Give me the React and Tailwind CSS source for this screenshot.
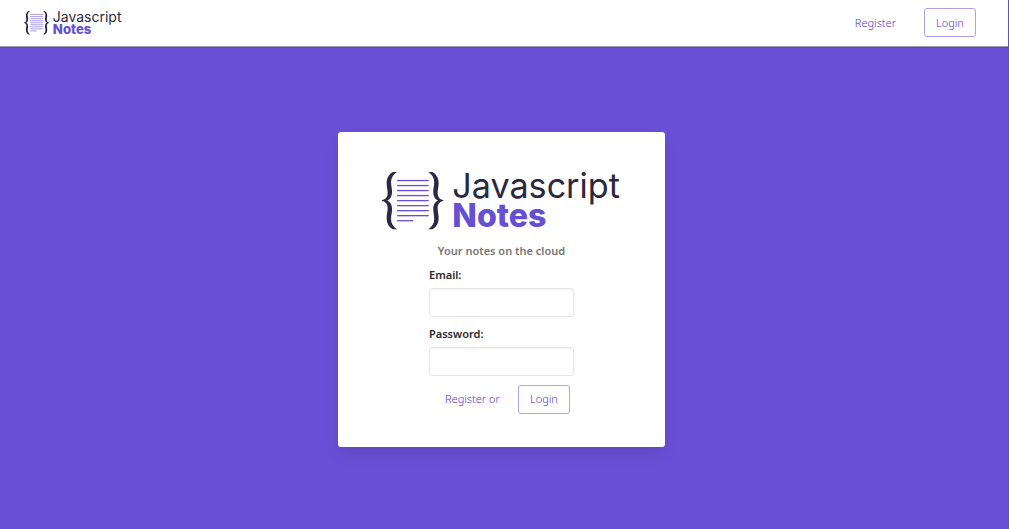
const LINES = [8, 13, 18, 23, 28, 33, 38, 43];

const BRACE =
  "M15 0 L11 0 C7 2 4.600 6 4.600 11 C4.600 15 5.600 17.500 5.600 21 C5.600 25 3.500 27.500 0 28 L0 29 C3.500 29.500 5.600 32 5.600 36 C5.600 39.500 4.600 42 4.600 46 C4.600 51 7 55 11 57 L15 57 C11 54.500 9 51 9 47 C9 43 10 40.500 10 37 C10 33 8.400 30 5.300 28.500 C8.400 27 10 24 10 20 C10 16.500 9 14 9 10 C9 6 11 2.500 15 0 Z";

function Logo({ className }) {
  return (
    <svg viewBox="0 0 238 58" className={className} role="img" aria-label="Javascript Notes">
      <g fill="#2b2840">
        <path d={BRACE} />
        <path transform="translate(61 0) scale(-1 1)" d={BRACE} />
      </g>
      <g stroke="#6550d4" strokeWidth="1.3">
        {LINES.map((y) => (
          <line key={y} x1="15" x2="46.500" y1={y + 0.5} y2={y + 0.5} />
        ))}
        <line x1="15" x2="31" y1="48.500" y2="48.500" />
      </g>
      <text x="70" y="26" fontSize="34" fill="#2b2840" className="font-['Inter',sans-serif] font-normal">
        Javascript
      </text>
      <text x="70" y="55" fontSize="32" fill="#6550d4" className="font-['Inter',sans-serif] font-extrabold">
        Notes
      </text>
    </svg>
  );
}

function LoginButton({ type = "button" }) {
  return (
    <button type={type} className="h-[29px] w-[52px] rounded-[3px] border border-[#afa1e9] bg-white text-[#5536cc]">
      Login
    </button>
  );
}

function Field({ id, label, type }) {
  return (
    <div className="flex flex-col gap-[5px]">
      <label htmlFor={id} className="font-semibold text-[#2b2b2b]">
        {label}
      </label>
      <input
        id={id}
        type={type}
        className="h-[29px] w-full rounded-[3px] border border-[#e6e6e6] bg-white px-2 shadow-[inset_0_1px_1px_rgba(10,10,10,0.05)] outline-none"
      />
    </div>
  );
}

export default function App() {
  return (
    <div className="flex min-h-screen flex-col bg-[#694fd6] font-['Noto_Sans','Open_Sans',sans-serif] text-[11px] leading-4">
      <header className="mr-px flex items-center justify-between border-b border-[#a3a0b0] bg-white pt-2 pr-8 pb-[9px] pl-6 shadow-[0_1px_0_rgba(10,10,10,0.15)]">
        <a href="#home">
          <Logo className="block w-[98px] overflow-visible" />
        </a>
        <nav className="flex items-center gap-7 font-light">
          <a href="#register" className="text-[#5536cc]">
            Register
          </a>
          <LoginButton />
        </nav>
      </header>

      <main className="flex grow items-center justify-center pt-[3px] pr-1.5">
        <section className="flex w-full max-w-[327px] flex-col items-center rounded-[3px] bg-white px-11 pt-10 pb-[33px] shadow-[0_8px_16px_-2px_rgba(10,10,10,0.1)]">
          <Logo className="block w-full overflow-visible" />
          <h1 className="mt-3 font-semibold text-[#757575]">Your notes on the cloud</h1>
          <form className="mt-2 flex w-[145px] flex-col gap-[9px]" onSubmit={(e) => e.preventDefault()}>
            <Field id="email" label="Email:" type="email" />
            <Field id="password" label="Password:" type="password" />
            <div className="flex items-center justify-between pr-1 pl-4 font-light">
              <a href="#register" className="text-[#5536cc]">
                Register or
              </a>
              <LoginButton type="submit" />
            </div>
          </form>
        </section>
      </main>
    </div>
  );
}
